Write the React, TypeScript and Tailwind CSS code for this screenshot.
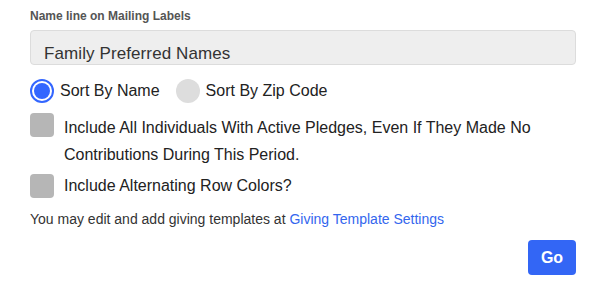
import { useState } from "react";

function Radio({ checked }: { checked: boolean }) {
  if (checked) {
    return (
      <span className="flex h-6 w-6 shrink-0 items-center justify-center rounded-full border-2 border-[#3366ff] p-[2px]">
        <span className="h-full w-full rounded-full bg-[#3366ff]" />
      </span>
    );
  }
  return <span className="h-6 w-6 shrink-0 rounded-full bg-[#dddddd]" />;
}

function Checkbox() {
  return <span className="h-6 w-6 shrink-0 rounded-[4px] bg-[#b6b6b6]" />;
}

export default function App() {
  const [sort, setSort] = useState<"name" | "zip">("name");

  return (
    <div className="w-[608px] bg-white pl-[30px] pr-[32px] pt-[8px] font-['Liberation_Sans',Arial,sans-serif] text-[#222]">
      <div className="text-[12px] font-bold leading-[16px] text-[#555]">
        Name line on Mailing Labels
      </div>

      <div className="mt-[6px] h-[35px] rounded-[4px] border border-[#dcdcdc] bg-[#eeeeee] pl-[13px] pt-[13px] text-[17px] leading-[20px] tracking-[0.1px] text-[#333]">
        Family Preferred Names
      </div>

      <div className="mt-[14px] flex items-center text-[16px] leading-6">
        <button
          className="flex items-center gap-[6px]"
          onClick={() => setSort("name")}
        >
          <Radio checked={sort === "name"} />
          <span>Sort By Name</span>
        </button>
        <button
          className="ml-[16px] flex items-center gap-[6px]"
          onClick={() => setSort("zip")}
        >
          <Radio checked={sort === "zip"} />
          <span>Sort By Zip Code</span>
        </button>
      </div>

      <div className="mt-[10px] flex items-start gap-[10px]">
        <Checkbox />
        <div className="mt-[1px] text-[16px] leading-[27px]">
          Include All Individuals With Active Pledges, Even If They Made No
          <br />
          Contributions During This Period.
        </div>
      </div>

      <div className="mt-[6px] flex items-center gap-[10px]">
        <Checkbox />
        <div className="text-[16px] leading-6">Include Alternating Row Colors?</div>
      </div>

      <div className="mt-[11px] text-[14px] leading-[20px] text-[#333]">
        You may edit and add giving templates at{" "}
        <a href="#" className="text-[#3366ee]">
          Giving Template Settings
        </a>
      </div>

      <div className="mt-[11px] flex justify-end">
        <button className="h-[35px] w-[48px] rounded-[4px] bg-[#3366f5] text-[16px] font-bold text-white">
          Go
        </button>
      </div>
    </div>
  );
}
